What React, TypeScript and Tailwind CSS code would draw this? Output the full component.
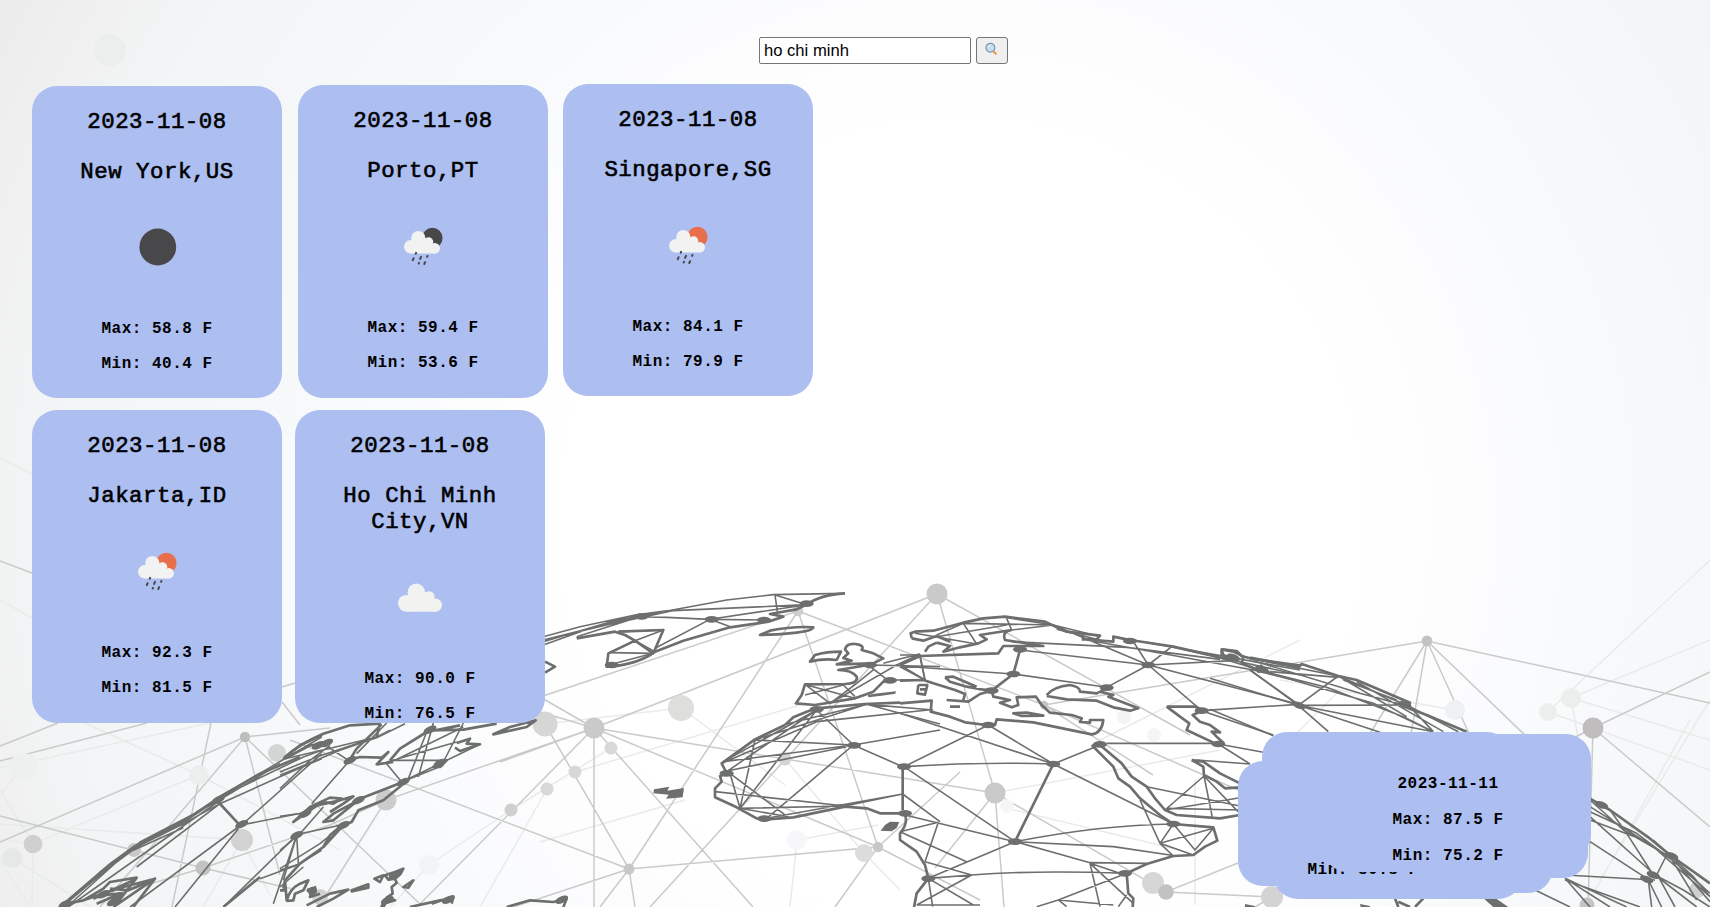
import React from "react";

const LIGHT_LINES =
  "M937 594L594 728 386 800 325 897M798 611L540 697M798 611L629 869M798 611L878 847M798 611L1044 705M937 594L650 907M937 594L1190 735M937 594L995 793 1004 907M995 793L785 759 594 728M995 793L935 868M995 793L1166 892 1238 863M594 728V907M594 728L753 907M594 728L878 847 980 900M594 728L540 697M594 728L420 904M594 728L500 762M545 724L629 869 878 847 835 907M878 847L960 772M629 869L290 740M629 869L480 918M629 869L635 907M629 869L600 907M540 712L594 728M1427 641L1044 705 1153 775M1427 641L1366 740M1427 641L1410 740M1427 641L1472 740M1427 641L1530 740M1427 641L1710 703M1593 728L1710 672M1593 728L1710 827M1593 728L1588 907M1593 728L1560 745M0 746L58 723M0 761L147 723M0 842L245 737 330 728M211 723L172 907M0 816L203 868 293 889M245 737L100 907M245 737L280 875M245 737L420 904M203 868L330 825 386 800M203 868L120 893M282 702L300 725M0 561L32 573M282 687L295 683M1044 705L1238 790M1166 892L1272 897M1272 897L1255 907";
const FAINT_LINES =
  "M0 458L32 474M0 600L32 618M0 768L210 723M85 723L199 775 33 844 10 840M199 775L340 850M0 824L242 840 203 907M242 840L270 895M0 790L33 844 32 907M12 858L90 907M0 860L30 907M23 767L0 795M545 724L681 708 785 785M611 748L511 810 429 865M575 772L800 705M547 789L480 907M540 842L685 800M785 759L864 853 900 890M797 840L878 825M797 840L790 907M429 865L390 907M1571 698L1710 640M1571 698L1580 750M1548 712L1710 560M1548 712L1710 770M1587 905L1690 720M1455 710L1280 680M1340 690L1280 750M1100 740L1300 640M1195 905V780M995 793L1220 750M1006 808L1180 850M1571 698L1710 740M1600 880L1710 700";
const LIGHT_NODES: [number, number, number, string][] = [
  [110, 50, 16, "#eceded"], [937, 594, 10.5, "#cacaca"], [594, 728, 10.5, "#cacaca"], [681, 708, 13, "#dededd"],
  [611, 748, 6.5, "#d8d8d8"], [575, 772, 6.5, "#d8d8d8"], [547, 789, 6.5, "#d8d8d8"], [511, 810, 6.5, "#d0d0d0"],
  [629, 869, 5.5, "#c8c8c8"], [798, 611, 5.2, "#cccccc"], [785, 759, 6.5, "#d4d4d4"], [878, 847, 5.2, "#c8c8c8"],
  [864, 853, 9, "#dcdcdb"], [545, 724, 12.5, "#d6d6d6"], [797, 840, 10, "#f6f7fa"], [995, 793, 10.5, "#c9c9c9"],
  [1153, 883, 11, "#d6d6d6"], [1166, 892, 7.8, "#c2c2c2"], [1272, 897, 11, "#d3d3d3"], [1044, 705, 4.2, "#c6c6c6"],
  [1124, 717, 7, "#f3f5f5"], [1154, 735, 7, "#f3f5f7"], [1007, 806, 7, "#f5f7f7"], [1427, 641, 5.4, "#c2c2c2"],
  [1593, 728, 10.5, "#bfbdbd"], [1571, 698, 10, "#eceeed"], [1548, 712, 9, "#eceeed"], [1455, 710, 10, "#eff0f1"],
  [1587, 905, 7.5, "#c4c4c4"], [1697, 890, 8, "#cfcfcf"], [245, 737, 5.2, "#bcbdbd"], [277, 753, 9, "#d3d4d4"],
  [199, 775, 10, "#eceeee"], [33, 844, 9.3, "#cfcfcf"], [134, 850, 7, "#c8c8c8"], [242, 840, 11, "#d2d2d2"],
  [203, 868, 7.6, "#c2c2c2"], [23, 767, 14, "#eeefef"], [12, 858, 10, "#e6e7e7"], [386, 800, 10.5, "#cccccc"],
  [429, 865, 10, "#f2f3f5"], [320, 897, 8, "#d0d0d0"],
];

type Tile = { x: number; y: number; thin: string; coast: string; solid?: string; nodes: [number, number][] };

const TILES: Tile[] = [
  {
    x: 540, y: 570,
    thin:
      "M10 200L120 170 285 135 385 122 560 90 700 74 915 70M10 225L150 175 290 140 380 142 510 148 690 150M10 215L230 150 400 122 800 104M10 210L130 180 290 138M20 208L200 165 380 126M705 75L712 125M705 75L800 104M510 148L800 104M510 148L575 172M510 148L345 235M110 200L285 145 385 125M235 185L370 180 285 212 210 248 340 250 215 283M245 190L345 245M795 343L870 400M800 345L945 385M910 345L795 375M910 345L945 380M985 285L1040 328M1060 330L1155 330M990 285L1200 290M1030 280L1138 252 1155 330M1070 285L1155 330M870 400L1070 285 1140 252M870 400L950 340 1000 300M645 510L940 525M550 575L940 525M550 605L920 530M830 420L550 575M830 420L560 605M830 420L600 715M645 510L600 715M570 610L600 715M570 610L745 742M525 665L915 708 1088 672M600 715L915 708M680 745L1088 672M600 715L745 740M1088 672L1200 755M940 525L1200 480M980 403L1180 420M980 403L1200 462M740 462L980 403M650 508L980 403M830 455L1165 420M550 578L830 455M830 420L940 525 1088 590M680 745L940 525",
    coast:
      "M110 205L225 185 255 195 285 212 340 250 370 180 235 185M800 104L770 118 690 132 730 140 685 155 570 172 430 212 345 245Q300 280 215 290L200 290 205 250 285 212M800 104Q840 74 915 70M660 195L690 182Q760 168 820 172 820 182 770 188 700 195 660 195ZM15 275L45 290 15 308M810 275L825 255Q860 245 903 245L890 270Q850 265 810 275ZM915 238Q920 220 945 222 975 225 965 240L1000 250 1030 265 1000 280 890 283 935 272 910 264 925 250ZM985 285L895 300Q935 300 950 320 955 340 915 342L795 343 785 375 768 400 825 405 945 385 1000 365 1030 335 1050 330M735 465L760 442 800 425 830 415 975 402 1080 398M735 465L645 508 545 580 555 600 570 610 540 618 545 635 525 655 525 682 590 712 650 745 680 748 760 742 915 710 980 715 1020 730 1090 730",
    solid: "M342 658L388 650 382 662 432 654 428 682 378 686 386 674 340 670ZM1022 782L1035 765 1050 755 1078 756 1070 774 1055 784ZM984 374L1015 370 1068 364 1066 371 1025 377 985 382Z",
    nodes: [[800, 101], [515, 148], [305, 139], [215, 285], [990, 285], [1050, 331], [830, 418], [942, 526], [560, 610], [673, 746], [672, 150]],
  },
  {
    x: 900, y: 570,
    thin:
      "M45 190L230 222M190 160L230 222M110 200L320 165M110 195L190 160 460 165M320 145L335 180 460 165M315 142L460 165 590 197M460 165L745 285M470 178L620 215M335 215L680 232 960 268M360 240L745 285M0 288L340 312 620 352M620 352L745 285M700 215L745 285M815 230L745 285M745 285L1000 272M745 285L905 422M745 285L1195 403M730 215L1200 300M820 232L1200 315M560 210L700 235 1060 300 1200 335M1050 300L1195 403M905 422L1195 403M905 422L1120 495M955 522L1090 547M955 522L1050 582M620 520L955 520M795 720L912 618 937 742M795 720L1020 683M740 650L1020 708M800 715L1020 720M890 570L1050 582M912 618L1014 725M820 762L780 820 880 855M820 762L885 840 940 775 780 820 820 858M720 690L780 820M345 815Q600 765 820 762M12 590L265 465 460 582M12 590Q250 575 460 582M0 430L460 582M460 582L600 525M460 582L820 762M12 590L345 815M345 815L640 830 830 858M345 815L570 878 740 880M345 815L85 925M15 735L345 815M85 925L215 915Q400 900 680 910M85 925L220 1005M50 1005L215 915 75 875M85 925L98 1010M115 757L75 875M115 757L0 785M0 785L200 875M50 1005H240M570 880L600 1010M570 880L700 1000M680 910L475 990 410 1010M475 990L640 1005M475 990L500 1010M570 880L660 910M655 1010L680 975M0 255L60 255 75 330 0 285",
    coast:
      "M35 205L32 190 45 185 100 182 190 158 250 145 315 140 435 155 500 185 600 197 590 208 545 208M35 205L70 212 110 198 150 215M110 218L150 228 130 245 180 232 235 220 260 208 240 195 335 180M335 180Q305 185 315 210L430 228 310 228 295 250 60 258 0 285M75 245L85 230 110 218M580 210L640 215 640 200 680 208 710 213 820 230 960 262 1010 270M965 240L970 255 1010 272M965 238L1010 243 1025 258 1050 265 1200 287M1070 290L1100 300 1075 305ZM0 400L95 392 92 425 150 440 195 457 260 465 285 465 290 448 400 457 575 493Q605 490 610 450L570 450 570 458 540 456 545 445 515 435 450 428 425 405 408 380 350 382 355 405 335 412 300 398 330 390 280 380 275 362M275 362L240 372 205 395 140 390M190 390L195 372 165 360 100 340 70 330 0 332M135 322L150 335 200 350 245 358 275 362M135 322L160 320 230 350M150 410H180M340 430L380 428 430 437 365 438ZM55 345H85M82 345L75 374 52 370 55 345M60 358H78M440 375Q460 350 510 345 540 350 540 365L590 370 620 355M600 365L640 375 625 380 715 415 690 422 640 412 590 392 500 388 440 378M800 410L885 410 910 420M800 410L840 440 868 460 860 480 945 520 970 518 950 500 935 485 960 487 930 465 900 455 878 435 900 425M575 525L610 560 640 590 655 625 690 650 720 685 780 735 820 762M600 525L665 580 695 620 740 650 765 685 795 720 830 735 960 745 1020 735M875 570L910 590 912 615 950 635 975 655 1020 652M875 570L910 575 960 610 1020 640M820 762L940 772 952 812 915 830 880 855 820 858 740 882 680 910 685 970 700 985 698 1012M15 735Q25 760 0 790L0 810 50 845 75 885 85 925 50 970 42 1012M460 582L345 815M360 240L340 312 275 362M8 590V720",
    nodes: [[360, 238], [340, 312], [275, 362], [620, 353], [745, 285], [690, 213], [905, 422], [955, 522], [265, 465], [600, 523], [460, 582], [12, 590], [15, 730], [345, 815], [820, 762], [85, 926], [675, 910]],
  },
  {
    x: 1210, y: 600,
    thin:
      "M0 165L300 255 490 310 670 395M120 175L395 230M145 210L350 262 580 350 670 395M130 182L450 280 600 320M385 228L600 320 745 395M385 228L590 350M385 228L265 316M120 210L265 316 600 315M265 316L355 395M265 316L670 395M265 316L510 397M0 235L265 316M0 328L190 407M440 245L700 395M180 215L385 232M600 320L670 395M400 240L560 300M1140 600L1240 690 1370 765 1500 880M1140 620L1330 740 1500 890M1140 635L1280 700 1400 790 1500 905M1140 650L1335 825M1200 630L1250 700 1330 825M1330 720L1450 830 1500 890M1140 725L1310 835M1140 660L1300 720M1370 765L1340 825M1065 825L1335 840M1065 835L1200 921M1065 835L1250 921M1065 840L1290 921M975 870L1080 921M1065 835L1140 921M1315 840L1325 921M1315 840L1355 921M1335 825L1460 921M1335 825L1420 870 1500 921M1345 830L1395 921M1380 770L1460 900",
    coast:
      "M35 165L35 148 70 155 100 170 95 190 145 210 175 215 150 195M120 173L180 185 265 203 275 192 385 228 440 240 600 308 595 325 650 345 770 395M1140 596L1200 630 1315 712 1380 765 1500 850M555 895L565 921M565 905L600 921M640 895L615 921",
    solid: "M820 895L860 897 895 921 850 921ZM105 912L135 918 135 921 105 921ZM450 912L480 918 480 921 452 921Z",
    nodes: [[1175, 615], [1330, 825], [1310, 838], [585, 315], [267, 316], [1385, 768], [70, 172]],
  },
  {
    x: 0, y: 707,
    thin:
      "M180 600L300 495 400 420 560 335 650 275 770 205 965 90M190 595L420 405 640 290 840 170M200 600L350 465 410 420 550 350 660 290 850 205 965 155M205 600L545 360 575 325M650 275L910 150 965 130M545 360L660 280M400 430L550 362M720 355L895 320M735 345L965 140M715 360L390 600M715 365L525 600M895 380L670 600M660 290L410 480M190 590L330 470 405 415M780 515L890 475 965 430M820 590L890 385",
    coast:
      "M190 595L300 500 410 415 550 345 650 278M650 275L780 200 900 150M655 285L720 355M850 155L900 115 965 85M200 590L250 580 310 545 330 525 410 512 350 590M250 580L370 540 465 515 400 600M280 575L410 515M330 545L385 550 465 515 340 600M290 590L360 560 300 565M670 600L780 510",
    nodes: [[195, 592], [340, 585], [310, 562], [352, 568], [655, 278], [725, 352]],
  },
  {
    x: 280, y: 707,
    thin:
      "M0 195L110 150 290 90 330 70M15 155L145 125 290 90M0 205L180 130 290 92 375 50M145 120L205 160M205 165L95 290M0 245L90 160 150 115M330 160L495 160M320 165L530 105M320 170L365 225M440 75L385 215M460 48L415 210M550 48L490 165M345 160L550 60M365 225L600 112M230 280L490 175M0 328L90 315M40 385L180 355M0 430L60 380 130 300M50 385L55 470M50 385L10 520M0 490L60 470M0 485L120 410 200 345M0 540L70 480M230 140L320 48M40 345L130 285",
    coast:
      "M15 150Q60 110 130 80L210 55 300 50 290 90M15 155L90 115 150 110M205 160L240 150 305 152 325 135 290 172 340 165M205 165L230 125 305 52M330 160L360 125 440 75 540 55M450 70L550 68 650 50M530 108L570 95 560 110 600 112 540 132 525 122M640 82L690 60 767 40 740 60ZM460 180L500 160 480 180ZM365 235L310 280 235 310 215 345 190 355 130 420 60 470 15 520 10 545M370 225L240 275 160 340 130 345 160 320 235 280M40 345L90 300 150 272 185 275 160 290 130 285 100 300 75 320ZM90 300L180 280 220 268 190 290 150 315M130 420L150 385 185 355M15 520L20 580Q30 545 60 530L85 520 70 550 45 560 40 580 20 582M0 550H15M95 540Q100 560 90 570L120 560M80 552L105 545 100 565M110 600L160 575 205 548 150 560 80 595M215 550L265 532 265 542 215 553ZM283 515L310 505 300 525ZM315 505L345 495 370 485 362 500 345 515 325 518ZM370 540L400 520 385 542ZM345 515L350 528 335 540 338 560 320 572 345 580 310 590 303 600M325 575L310 600M455 590L520 568 515 590M390 600L480 580 520 575M680 600L750 580 820 585 860 575 850 600",
    solid: "M80 545L108 536 112 556 90 570Z",
    nodes: [[115, 115], [140, 108], [210, 160], [370, 225], [50, 385], [190, 355], [450, 68], [480, 168], [322, 580], [345, 505], [505, 578], [845, 578], [235, 280], [75, 320]],
  },
];

function nodeTurn(tile: number, x: number, y: number) {
  if (tile > 2) return `rotate(-25 ${x} ${y})`;
  return tile === 2 ? `rotate(20 ${x} ${y})` : undefined;
}

function Backdrop() {
  return (
    <svg className="absolute inset-0 -z-10" width="1710" height="907" viewBox="0 0 1710 907" fill="none" aria-hidden="true">
      <defs>
        <radialGradient id="haze" gradientUnits="userSpaceOnUse" cx="960" cy="520" r="1100">
          <stop offset="0.36" stopColor="#ffffff" />
          <stop offset="0.56" stopColor="#f9fafc" />
          <stop offset="0.84" stopColor="#f3f4f5" />
          <stop offset="1" stopColor="#ebebeb" />
        </radialGradient>
      </defs>
      <rect width="1710" height="907" fill="url(#haze)" />
      <path d={FAINT_LINES} stroke="#e9ebeb" strokeWidth="1.5" />
      <path d={LIGHT_LINES} stroke="#c9caca" strokeWidth="1.5" />
      {LIGHT_NODES.map(([x, y, r, fill], i) => (
        <circle key={i} cx={x} cy={y} r={r} fill={fill} />
      ))}
      {TILES.map((t, i) => (
        <g key={i} transform={`translate(${t.x} ${t.y}) scale(0.33333)`} stroke="#6c6f6d" strokeLinejoin="round">
          <path d={t.thin} strokeWidth="4.8" />
          <path d={t.coast} strokeWidth="8" />
          {t.solid && <path d={t.solid} fill="#6c6f6d" stroke="none" />}
          {t.nodes.map(([x, y], k) => (
            <ellipse key={k} cx={x} cy={y} rx="21" ry="10" fill="#6c6f6d" stroke="none" transform={nodeTurn(i, x, y)} />
          ))}
        </g>
      ))}
    </svg>
  );
}

type Sky = "clear" | "rain-night" | "rain-day" | "cloud";

function SkyIcon({ sky }: { sky: Sky }) {
  if (sky === "clear") {
    return (
      <svg width="50" height="50" viewBox="0 0 50 50" className="shrink-0">
        <circle cx="25.8" cy="25" r="18.4" fill="#48484a" />
      </svg>
    );
  }
  if (sky === "cloud") {
    return (
      <svg width="50" height="50" viewBox="0 0 50 50" className="shrink-0" fill="#f2f2f0">
        <circle cx="21.3" cy="20.4" r="8.8" />
        <circle cx="11.4" cy="31.3" r="8.4" />
        <circle cx="34" cy="24.8" r="5.6" />
        <circle cx="40.4" cy="33.1" r="6.6" />
        <path d="M11.4 39.7V29L20 19 34 21 37 30 41 39.7Z" />
      </svg>
    );
  }
  return (
    <svg width="50" height="50" viewBox="0 0 50 50" className="shrink-0">
      <circle cx="34.4" cy="17" r="10.2" fill={sky === "rain-day" ? "#e96e4b" : "#48484a"} />
      <g fill="#f2f2f2">
        <circle cx="20.3" cy="17" r="7.1" />
        <circle cx="12.8" cy="25.8" r="6.8" />
        <circle cx="30.6" cy="21" r="4.7" />
        <circle cx="36.8" cy="27.3" r="5.2" />
        <path d="M12.8 32.5V24L20 16 31 18 34 25 37 32.5Z" />
      </g>
      <path
        d="M18.1 31.9l-.3.9M15.6 37.2l-.8 1.9M23 35.9l-.9 2M29.4 35l-.3.8M21 41.9l-.3.6M27.1 41.2l-.8 1.8"
        stroke="#48484a" strokeWidth="2" strokeLinecap="round"
      />
    </svg>
  );
}

type CityCard = { date: string; city: string; sky: Sky; max: string; min: string };

const BIG = "text-[22.4px] leading-[26px] tracking-[0.5px] [-webkit-text-stroke:0.6px_black]";
const SMALL = "text-base leading-[18px] font-bold tracking-[0.5px]";

function Card({ data, className }: { data: CityCard; className: string }) {
  return (
    <article className={`flex w-[250px] shrink-0 flex-col items-center rounded-[25px] bg-[#adbef1] px-4 pt-[23px] text-center ${className}`}>
      <p className={BIG}>{data.date}</p>
      <h2 className={`mt-6 ${BIG}`}>{data.city}</h2>
      <div className="mt-[37px]">
        <SkyIcon sky={data.sky} />
      </div>
      <p className={`mt-12 ${SMALL}`}>Max: {data.max} F</p>
      <p className={`mt-[17px] ${SMALL}`}>Min: {data.min} F</p>
    </article>
  );
}

function DayCard({ date, max, min, className }: { date?: string; max?: string; min?: string; className: string }) {
  return (
    <article className={`absolute flex h-[125px] w-[250px] flex-col items-center gap-[18px] rounded-[25px] bg-[#adbef1] pt-[28px] ${className}`}>
      {date && <p className={SMALL}>{date}</p>}
      {max && <p className={SMALL}>Max: {max} F</p>}
      {min && <p className={SMALL}>Min: {min} F</p>}
    </article>
  );
}

function Magnifier() {
  return (
    <svg width="12" height="13" viewBox="0 0 12 13" className="-mt-1 -ml-0.5" fill="none">
      <path d="M8.2 9L10.8 11.8" stroke="#f0953f" strokeWidth="2" strokeLinecap="round" />
      <circle cx="5.4" cy="5.7" r="4.4" fill="#c5dff0" stroke="#7d93a8" strokeWidth="1.2" />
      <path d="M3.4 5Q4 3.4 5.6 3.2" stroke="#eef7fc" strokeWidth="1" />
    </svg>
  );
}

export default function App() {
  return (
    <main className="relative isolate h-[907px] w-[1710px] overflow-hidden font-['Liberation_Mono','Courier_New',monospace] text-black">
      <Backdrop />
      <form className="flex gap-[5px] pt-[37px] pl-[759px]" onSubmit={(e) => e.preventDefault()}>
        <input
          className="h-[27px] w-[212px] rounded-[2px] border border-[#767676] bg-white px-1 font-['Liberation_Sans',Arial,sans-serif] text-[16.6px] outline-none"
          defaultValue="ho chi minh"
        />
        <button aria-label="Search" className="flex h-[27px] w-8 items-center justify-center rounded-[3px] border border-[#767676] bg-[#efefef]">
          <Magnifier />
        </button>
      </form>
      <section className="flex h-[346px] items-start pt-5 pl-8">
        <Card className="mt-[2px] h-[312px]" data={{ date: "2023-11-08", city: "New York,US", sky: "clear", max: "58.8", min: "40.4" }} />
        <Card className="mt-px ml-4 h-[313px]" data={{ date: "2023-11-08", city: "Porto,PT", sky: "rain-night", max: "59.4", min: "53.6" }} />
        <Card className="ml-[15px] h-[312px]" data={{ date: "2023-11-08", city: "Singapore,SG", sky: "rain-day", max: "84.1", min: "79.9" }} />
      </section>
      <section className="flex items-start gap-[13px] pl-8">
        <Card className="h-[313px]" data={{ date: "2023-11-08", city: "Jakarta,ID", sky: "rain-day", max: "92.3", min: "81.5" }} />
        <Card className="h-[313px]" data={{ date: "2023-11-08", city: "Ho Chi Minh City,VN", sky: "cloud", max: "90.0", min: "76.5" }} />
      </section>
      <DayCard className="top-[774px] left-[1273px]" />
      <DayCard className="top-[768px] left-[1303px]" />
      <DayCard className="top-[753px] left-[1338px]" />
      <article className="absolute top-[761px] left-[1238px] flex h-[125px] w-[250px] flex-col items-center justify-end rounded-[25px] bg-[#adbef1] pb-[7px]">
        <p className={SMALL}>Min: 80.8 F</p>
      </article>
      <DayCard className="top-[732px] left-[1262px]" />
      <DayCard className="top-[734px] left-[1341px]" />
      <DayCard className="top-[747px] left-[1323px]" date="2023-11-11" max="87.5" min="75.2" />
    </main>
  );
}
